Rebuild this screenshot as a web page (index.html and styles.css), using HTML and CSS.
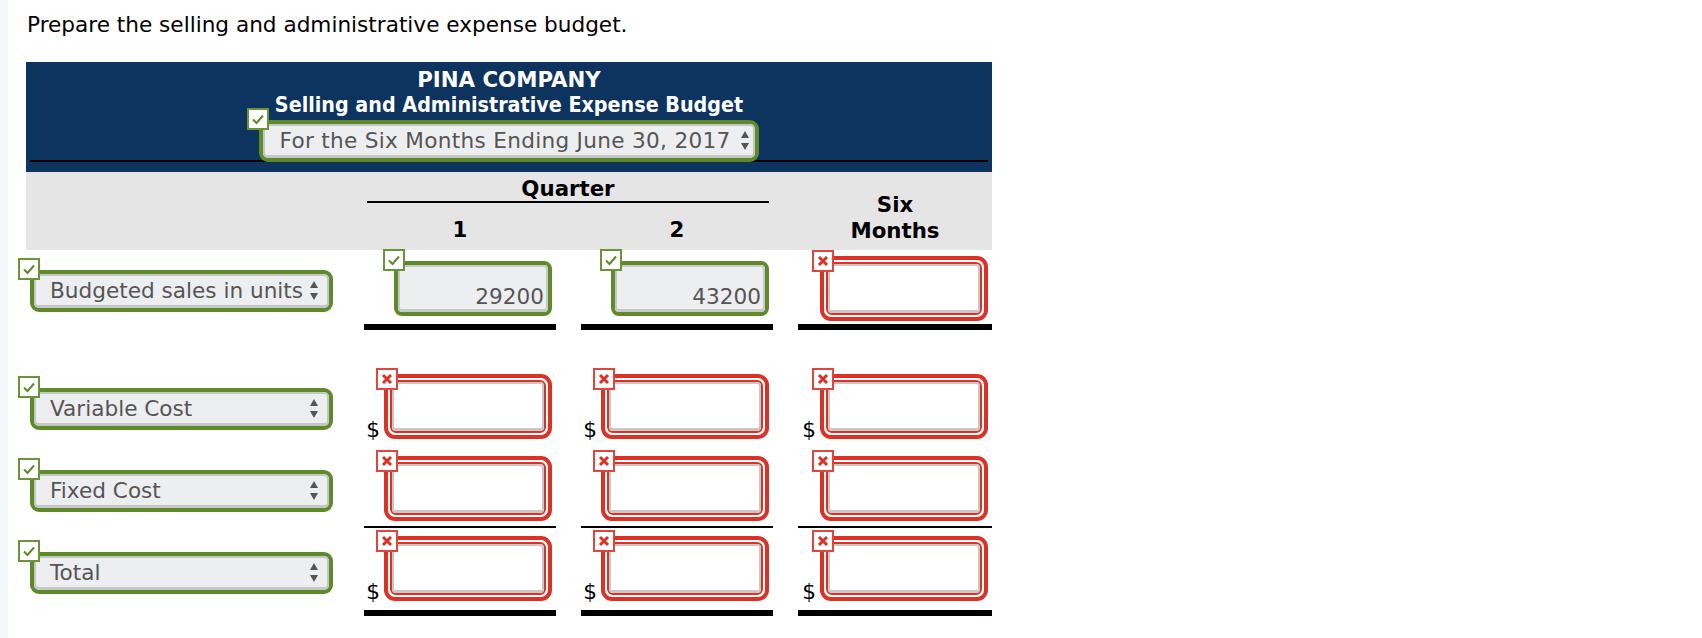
FILE: index.html
```html
<!DOCTYPE html>
<html>
<head>
<meta charset="utf-8">
<title>Selling and Administrative Expense Budget</title>
<link rel="stylesheet" href="styles.css">
</head>
<body>
<div class="page">
  <p class="prompt">Prepare the selling and administrative expense budget.</p>
  <div class="sheet">
    <div class="hdr">
      <div class="co">PINA COMPANY</div>
      <div class="ttl">Selling and Administrative Expense Budget</div>
      <div class="hdr-sel-row">
        <span class="sel sel-hdr">
          <span class="mark ok"><svg viewBox="0 0 18 18" width="18" height="18"><polyline points="4,9.5 7.5,13 14,5.5" fill="none" stroke="#5e8a2a" stroke-width="2"/></svg></span>
          <span class="sel-in">For the Six Months Ending June 30, 2017<svg class="arrows" viewBox="0 0 8 19"><polygon points="0,7 4,0 8,7"/><polygon points="0,12 8,12 4,19"/></svg></span>
        </span>
      </div>
      <div class="hdr-rule"></div>
    </div>

    <div class="colhead">
      <div></div>
      <div class="qtr">
        <div class="qtr-t">Quarter</div>
        <div class="qtr-nums"><span>1</span><span>2</span></div>
      </div>
      <div class="six">Six<br>Months</div>
    </div>

    <div class="row r1">
      <div class="lab"><span class="sel sel-lab"><span class="mark ok"><svg viewBox="0 0 18 18" width="18" height="18"><polyline points="4,9.5 7.5,13 14,5.5" fill="none" stroke="#5e8a2a" stroke-width="2"/></svg></span><span class="sel-in">Budgeted sales in units<svg class="arrows" viewBox="0 0 8 19"><polygon points="0,7 4,0 8,7"/><polygon points="0,12 8,12 4,19"/></svg></span></span></div>
      <div class="cell"><span class="field ok"><span class="mark ok"><svg viewBox="0 0 18 18" width="18" height="18"><polyline points="4,9.5 7.5,13 14,5.5" fill="none" stroke="#5e8a2a" stroke-width="2"/></svg></span><span class="inp">29200</span></span></div>
      <div class="cell"><span class="field ok"><span class="mark ok"><svg viewBox="0 0 18 18" width="18" height="18"><polyline points="4,9.5 7.5,13 14,5.5" fill="none" stroke="#5e8a2a" stroke-width="2"/></svg></span><span class="inp">43200</span></span></div>
      <div class="cell"><span class="field bad"><span class="mark bad"><svg viewBox="0 0 18 18" width="18" height="18"><path d="M5 5 L13 13 M13 5 L5 13" stroke="#db3126" stroke-width="3" fill="none"/></svg></span><span class="box"><span class="inp"></span></span></span></div>
    </div>

    <div class="row r2">
      <div class="lab"><span class="sel sel-lab"><span class="mark ok"><svg viewBox="0 0 18 18" width="18" height="18"><polyline points="4,9.5 7.5,13 14,5.5" fill="none" stroke="#5e8a2a" stroke-width="2"/></svg></span><span class="sel-in">Variable Cost<svg class="arrows" viewBox="0 0 8 19"><polygon points="0,7 4,0 8,7"/><polygon points="0,12 8,12 4,19"/></svg></span></span></div>
      <div class="cell"><span class="dollar">$</span><span class="field bad"><span class="mark bad"><svg viewBox="0 0 18 18" width="18" height="18"><path d="M5 5 L13 13 M13 5 L5 13" stroke="#db3126" stroke-width="3" fill="none"/></svg></span><span class="box"><span class="inp"></span></span></span></div>
      <div class="cell"><span class="dollar">$</span><span class="field bad"><span class="mark bad"><svg viewBox="0 0 18 18" width="18" height="18"><path d="M5 5 L13 13 M13 5 L5 13" stroke="#db3126" stroke-width="3" fill="none"/></svg></span><span class="box"><span class="inp"></span></span></span></div>
      <div class="cell"><span class="dollar">$</span><span class="field bad"><span class="mark bad"><svg viewBox="0 0 18 18" width="18" height="18"><path d="M5 5 L13 13 M13 5 L5 13" stroke="#db3126" stroke-width="3" fill="none"/></svg></span><span class="box"><span class="inp"></span></span></span></div>
    </div>

    <div class="row r3">
      <div class="lab"><span class="sel sel-lab"><span class="mark ok"><svg viewBox="0 0 18 18" width="18" height="18"><polyline points="4,9.5 7.5,13 14,5.5" fill="none" stroke="#5e8a2a" stroke-width="2"/></svg></span><span class="sel-in">Fixed Cost<svg class="arrows" viewBox="0 0 8 19"><polygon points="0,7 4,0 8,7"/><polygon points="0,12 8,12 4,19"/></svg></span></span></div>
      <div class="cell"><span class="field bad"><span class="mark bad"><svg viewBox="0 0 18 18" width="18" height="18"><path d="M5 5 L13 13 M13 5 L5 13" stroke="#db3126" stroke-width="3" fill="none"/></svg></span><span class="box"><span class="inp"></span></span></span></div>
      <div class="cell"><span class="field bad"><span class="mark bad"><svg viewBox="0 0 18 18" width="18" height="18"><path d="M5 5 L13 13 M13 5 L5 13" stroke="#db3126" stroke-width="3" fill="none"/></svg></span><span class="box"><span class="inp"></span></span></span></div>
      <div class="cell"><span class="field bad"><span class="mark bad"><svg viewBox="0 0 18 18" width="18" height="18"><path d="M5 5 L13 13 M13 5 L5 13" stroke="#db3126" stroke-width="3" fill="none"/></svg></span><span class="box"><span class="inp"></span></span></span></div>
    </div>

    <div class="row r4">
      <div class="lab"><span class="sel sel-lab"><span class="mark ok"><svg viewBox="0 0 18 18" width="18" height="18"><polyline points="4,9.5 7.5,13 14,5.5" fill="none" stroke="#5e8a2a" stroke-width="2"/></svg></span><span class="sel-in">Total<svg class="arrows" viewBox="0 0 8 19"><polygon points="0,7 4,0 8,7"/><polygon points="0,12 8,12 4,19"/></svg></span></span></div>
      <div class="cell"><span class="dollar">$</span><span class="field bad"><span class="mark bad"><svg viewBox="0 0 18 18" width="18" height="18"><path d="M5 5 L13 13 M13 5 L5 13" stroke="#db3126" stroke-width="3" fill="none"/></svg></span><span class="box"><span class="inp"></span></span></span></div>
      <div class="cell"><span class="dollar">$</span><span class="field bad"><span class="mark bad"><svg viewBox="0 0 18 18" width="18" height="18"><path d="M5 5 L13 13 M13 5 L5 13" stroke="#db3126" stroke-width="3" fill="none"/></svg></span><span class="box"><span class="inp"></span></span></span></div>
      <div class="cell"><span class="dollar">$</span><span class="field bad"><span class="mark bad"><svg viewBox="0 0 18 18" width="18" height="18"><path d="M5 5 L13 13 M13 5 L5 13" stroke="#db3126" stroke-width="3" fill="none"/></svg></span><span class="box"><span class="inp"></span></span></span></div>
    </div>
  </div>
</div>
</body>
</html>
```

FILE: styles.css
```css
* { box-sizing: border-box; }
html, body { margin: 0; background: #fff; }
body {
  font-family: "DejaVu Sans", Verdana, sans-serif;
  font-size: 21.6px;
  color: #000;
}
.page {
  border-left: 8px solid #f4f6f9;
  min-height: 638px;
  padding: 13px 0 0 18px;
}
.prompt {
  margin: 0 0 25px;
  line-height: 24px;
  padding-left: 1px;
}
.sheet { width: 966px; }

/* dark header */
.hdr {
  background: #0d335f;
  color: #fff;
  padding: 5px 4px 10px;
  text-align: center;
  font-weight: bold;
  font-size: 21.3px;
  line-height: 25px;
}
.ttl {
  font-family: "DejaVu Sans Condensed", "DejaVu Sans", sans-serif;
  font-stretch: condensed;
}
.hdr-sel-row { margin-top: 3px; height: 40px; }
.hdr-rule { border-top: 2px solid #000; }

/* select look-alike */
.sel {
  position: relative;
  display: inline-flex;
  height: 42px;
  border: 4px solid #5e8a2a;
  border-radius: 9px;
  background: #edeef0;
  vertical-align: top;
  font-family: "DejaVu Sans", Verdana, sans-serif;
  font-size: 21.6px;
  font-weight: normal;
  font-stretch: normal;
  color: #555;
  line-height: normal;
  text-align: left;
}
.sel-in {
  flex: 1;
  display: flex;
  align-items: center;
  border: 2px solid #c6c6c6;
  border-bottom-width: 3px;
  border-radius: 5px;
  padding: 0 4px 0 14px;
  background: #edeef0;
  white-space: nowrap;
}
.sel-hdr .sel-in { letter-spacing: 0.3px; }
.arrows {
  flex: none;
  width: 8px;
  height: 19px;
  margin-left: 10px;
  fill: #555;
}
.sel-lab { width: 303px; }
.sel-lab .arrows { margin-left: auto; margin-right: 5px; }

/* status marks */
.mark {
  position: absolute;
  left: -16px;
  top: -16px;
  width: 22px;
  height: 22px;
  background: #fff;
  border: 2px solid #6b9338;
  display: flex;
  align-items: center;
  justify-content: center;
  z-index: 1;
}
.mark.bad { border-color: #e0463b; }
.field.ok .mark { left: -15px; top: -16px; }
.field.bad .mark { left: -12px; top: -10px; }

/* column header band */
.colhead {
  background: #e5e5e5;
  display: grid;
  grid-template-columns: 313px 409px 194px;
  column-gap: 25px;
  height: 78px;
  font-size: 21.3px;
  font-weight: bold;
}
.qtr { padding-top: 5px; }
.qtr-t {
  line-height: 24px;
  border-bottom: 2px solid #000;
  margin: 0 4px 0 3px;
  text-align: center;
}
.qtr-nums {
  display: grid;
  grid-template-columns: 192px 192px;
  column-gap: 25px;
  margin-top: 15px;
  line-height: 24px;
  text-align: center;
}
.six {
  align-self: end;
  padding-bottom: 6px;
  line-height: 26px;
  text-align: center;
}

/* body rows */
.row {
  display: grid;
  grid-template-columns: 313px 192px 192px 194px;
  column-gap: 25px;
}
.lab { padding-left: 4px; }
.cell {
  display: flex;
  justify-content: flex-end;
  align-items: center;
}
.dollar {
  align-self: flex-end;
  line-height: 18px;
  margin-right: 4px;
}
.field { position: relative; margin-right: 4px; display: flex; flex: none; }
.field.bad {
  width: 168px;
  height: 65px;
  border: 4px solid #db3126;
  border-radius: 11px;
  padding: 2px;
  background: #fff;
}
.field.bad .box {
  flex: 1;
  display: flex;
  border: 2px solid #db3126;
  border-radius: 6px;
}
.field.bad .inp {
  flex: 1;
  border: 2px solid #c8c8c8;
  border-bottom-width: 3px;
  border-radius: 4px;
  background: #fff;
}
.field.ok {
  width: 158px;
  height: 55px;
  border: 4px solid #5e8a2a;
  border-radius: 8px;
  background: #edeef0;
}
.field.ok .inp {
  flex: 1;
  display: flex;
  align-items: flex-end;
  justify-content: flex-end;
  border: 2px solid #c8c8c8;
  border-bottom-width: 3px;
  border-radius: 4px;
  background: #edeef0;
  padding-right: 2px;
  color: #555;
}

.r1 .cell { padding: 6px 0 3px; border-bottom: 6px solid #000; }
.r1 .lab { padding-top: 20px; }
.r2 { margin-top: 44px; }
.r2 .lab { padding-top: 14px; }
.r3 { margin-top: 17px; }
.r3 .cell { padding-bottom: 5px; border-bottom: 2px solid #000; }
.r3 .lab { padding-top: 14px; }
.r4 { margin-top: 8px; }
.r4 .cell { padding-bottom: 9px; border-bottom: 6px solid #000; }
.r4 .lab { padding-top: 16px; }
```
